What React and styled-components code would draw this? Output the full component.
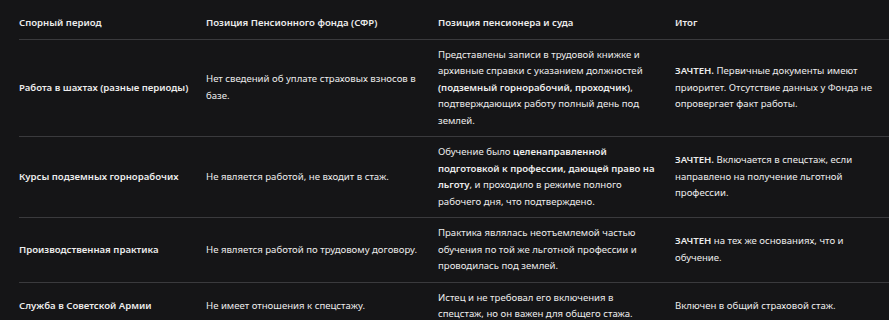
import React from "react";
import styled, { createGlobalStyle } from "styled-components";

const Global = createGlobalStyle`
  html, body {
    margin: 0;
    padding: 0;
    background: #151517;
  }
  body {
    font-family: "Noto Sans", "Open Sans", sans-serif;
    color: #ececec;
  }
`;

const Wrapper = styled.div`
  padding: 8px 0 0 19px;
  overflow: hidden;
  width: 889px;
  box-sizing: border-box;
`;

const Table = styled.table`
  border-collapse: collapse;
  table-layout: fixed;
  width: 880px;
  font-size: 9.6px;
  line-height: 16.5px;
`;

const Head = styled.th`
  text-align: left;
  font-weight: 600;
  padding: 7px 16px 7px 0;
  vertical-align: middle;
  border-bottom: 1px solid #3a3a3d;
`;

const Cell = styled.td`
  padding: 7px 16px 7px 0;
  vertical-align: middle;
  border-bottom: 1px solid #3a3a3d;
  font-weight: ${(p) => (p.$bold ? 600 : 400)};

  b {
    font-weight: 600;
  }
`;

const columns = [
  { title: "Спорный период", width: 187 },
  { title: "Позиция Пенсионного фонда (СФР)", width: 232 },
  { title: "Позиция пенсионера и суда", width: 237 },
  { title: "Итог", width: 224 },
];

const rows = [
  {
    period: "Работа в шахтах (разные периоды)",
    fund: "Нет сведений об уплате страховых взносов в базе.",
    court: (
      <>
        Представлены записи в трудовой книжке и архивные справки с указанием
        должностей <b>(подземный горнорабочий, проходчик)</b>, подтверждающих
        работу полный день под землей.
      </>
    ),
    result: (
      <>
        <b>ЗАЧТЕН.</b> Первичные документы имеют приоритет. Отсутствие данных у
        Фонда не опровергает факт работы.
      </>
    ),
  },
  {
    period: "Курсы подземных горнорабочих",
    fund: "Не является работой, не входит в стаж.",
    court: (
      <>
        Обучение было{" "}
        <b>целенаправленной подготовкой к профессии, дающей право на льготу</b>,
        и проходило в режиме полного рабочего дня, что подтверждено.
      </>
    ),
    result: (
      <>
        <b>ЗАЧТЕН.</b> Включается в спецстаж, если направлено на получение
        льготной профессии.
      </>
    ),
  },
  {
    period: "Производственная практика",
    fund: "Не является работой по трудовому договору.",
    court:
      "Практика являлась неотъемлемой частью обучения по той же льготной профессии и проводилась под землей.",
    result: (
      <>
        <b>ЗАЧТЕН</b> на тех же основаниях, что и обучение.
      </>
    ),
  },
  {
    period: "Служба в Советской Армии",
    fund: "Не имеет отношения к спецстажу.",
    court:
      "Истец и не требовал его включения в спецстаж, но он важен для общего стажа.",
    result: "Включен в общий страховой стаж.",
  },
];

export default function App() {
  return (
    <>
      <Global />
      <Wrapper>
        <Table>
          <colgroup>
            {columns.map((c) => (
              <col key={c.title} style={{ width: c.width }} />
            ))}
          </colgroup>
          <thead>
            <tr>
              {columns.map((c) => (
                <Head key={c.title}>{c.title}</Head>
              ))}
            </tr>
          </thead>
          <tbody>
            {rows.map((r) => (
              <tr key={r.period}>
                <Cell $bold>{r.period}</Cell>
                <Cell>{r.fund}</Cell>
                <Cell>{r.court}</Cell>
                <Cell>{r.result}</Cell>
              </tr>
            ))}
          </tbody>
        </Table>
      </Wrapper>
    </>
  );
}
